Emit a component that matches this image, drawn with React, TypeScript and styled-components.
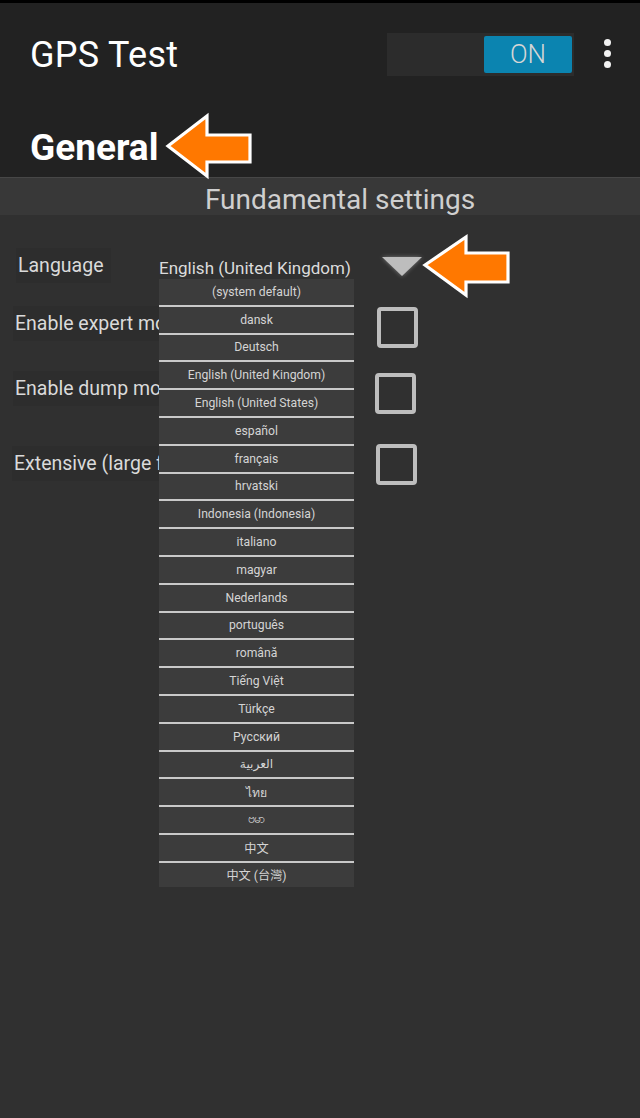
import React from "react";
import styled, { createGlobalStyle } from "styled-components";

const GlobalStyle = createGlobalStyle`
  html, body { margin: 0; padding: 0; background: #303030; }
  body { font-family: Roboto, "Noto Sans", "DejaVu Sans", "Noto Sans CJK TC", sans-serif; }
  * { box-sizing: border-box; }
`;

const Screen = styled.div`
  position: relative;
  width: 640px;
  height: 1118px;
  overflow: hidden;
  background: #303030;
  display: flex;
  flex-direction: column;
`;

const StatusStrip = styled.div`
  height: 3px;
  background: #000;
`;

const Header = styled.header`
  background: #222222;
  display: flex;
  flex-direction: column;
`;

const TopRow = styled.div`
  height: 104px;
  display: flex;
  align-items: center;
  padding-left: 30px;
`;

const Title = styled.h1`
  margin: 0;
  flex: 1;
  font-size: 36px;
  font-weight: 400;
  color: #ffffff;
  letter-spacing: 0.3px;
`;

const Toggle = styled.div`
  width: 187px;
  height: 43px;
  background: #2c2c2c;
  display: flex;
  justify-content: flex-end;
  align-items: center;
  padding-right: 2px;
  margin-top: -2px;
`;

const ToggleThumb = styled.div`
  width: 88px;
  height: 37px;
  background: #0b84b0;
  border-radius: 2px;
  color: #d6d6d6;
  font-size: 26px;
  font-weight: 300;
  display: flex;
  align-items: center;
  justify-content: center;
`;

const MenuButton = styled.div`
  width: 66px;
  height: 40px;
  display: flex;
  flex-direction: column;
  align-items: center;
  justify-content: center;
  gap: 4px;
  margin-top: -4px;
`;

const Dot = styled.span`
  width: 7px;
  height: 7px;
  border-radius: 50%;
  background: #f2f2f2;
`;

const Heading = styled.h2`
  margin: 0;
  height: 70px;
  padding: 10px 0 0 30px;
  display: flex;
  align-items: center;
  font-size: 37px;
  font-weight: 700;
  color: #ffffff;
`;

const SectionBar = styled.div`
  height: 38px;
  background: #383838;
  border-top: 1px solid #474747;
  display: flex;
  align-items: center;
  justify-content: center;
  padding: 5px 0 0 40px;
  font-size: 28px;
  color: #cfcfcf;
`;

const Settings = styled.div`
  display: flex;
  flex-direction: column;
`;

const Row = styled.div<{ $top: number; $h: number }>`
  margin-top: ${(p) => p.$top}px;
  height: ${(p) => p.$h}px;
  display: grid;
  grid-template-columns: 159px 195px 1fr;
  align-items: center;
`;

const Label = styled.div<{ $indent: number; $lift: number }>`
  grid-column: 1 / 3;
  grid-row: 1;
  justify-self: start;
  margin-left: ${(p) => p.$indent}px;
  margin-bottom: ${(p) => p.$lift}px;
  padding: 6px 8px 6px 2px;
  font-size: 19.5px;
  color: #dadada;
  background: #2d2d2d;
  white-space: nowrap;
`;

const ValueText = styled.div`
  grid-column: 2;
  grid-row: 1;
  margin-top: 4px;
  font-size: 17px;
  color: #dcdcdc;
  white-space: nowrap;
`;

const Control = styled.div<{ $shift: number }>`
  grid-column: 3;
  grid-row: 1;
  padding-left: ${(p) => p.$shift}px;
  display: flex;
  align-items: center;
`;

const Checkbox = styled.div`
  width: 41px;
  height: 41px;
  border: 4px solid #bdbdbd;
  border-radius: 4px;
`;

const Triangle = styled.svg`
  width: 40px;
  height: 22px;
  filter: drop-shadow(0 0 2px rgba(255, 255, 255, 0.35));
`;

const Dropdown = styled.ul`
  position: absolute;
  left: 159px;
  top: 279px;
  width: 195px;
  margin: 0;
  padding: 0;
  list-style: none;
  background: #3c3c3c;
`;

const Option = styled.li`
  height: 27.8px;
  border-bottom: 2px solid #c9c9c9;
  display: flex;
  align-items: center;
  justify-content: center;
  font-size: 12.2px;
  color: #d4d4d4;
  &:last-child {
    border-bottom: none;
    height: 24px;
  }
`;

const Callout = styled.svg<{ $x: number; $y: number }>`
  position: absolute;
  left: ${(p) => p.$x}px;
  top: ${(p) => p.$y}px;
  width: 92px;
  height: 68px;
  overflow: visible;
`;

const languages = [
  "(system default)",
  "dansk",
  "Deutsch",
  "English (United Kingdom)",
  "English (United States)",
  "español",
  "français",
  "hrvatski",
  "Indonesia (Indonesia)",
  "italiano",
  "magyar",
  "Nederlands",
  "português",
  "română",
  "Tiếng Việt",
  "Türkçe",
  "Русский",
  "العربية",
  "ไทย",
  "ဗမာ",
  "中文",
  "中文 (台灣)",
];

const ArrowCallout = ({ x, y, points }: { x: number; y: number; points: string }) => (
  <Callout $x={x} $y={y} viewBox="0 0 92 68">
    <polygon points={points} fill="#ff7800" stroke="#ffffff" strokeWidth={3.2} strokeLinejoin="miter" />
  </Callout>
);

export default function App() {
  return (
    <>
      <GlobalStyle />
      <Screen>
        <StatusStrip />
        <Header>
          <TopRow>
            <Title>GPS Test</Title>
            <Toggle>
              <ToggleThumb>ON</ToggleThumb>
            </Toggle>
            <MenuButton>
              <Dot />
              <Dot />
              <Dot />
            </MenuButton>
          </TopRow>
          <Heading>General</Heading>
        </Header>
        <SectionBar>Fundamental settings</SectionBar>
        <Settings>
          <Row $top={26} $h={50}>
            <Label $indent={16} $lift={2}>Language</Label>
            <ValueText>English (United Kingdom)</ValueText>
            <Control $shift={28}>
              <Triangle viewBox="0 0 40 22">
                <polygon points="0,2 40,2 20,21" fill="#bdbdbd" />
              </Triangle>
            </Control>
          </Row>
          <Row $top={10} $h={52}>
            <Label $indent={13} $lift={8}>Enable expert mode</Label>
            <Control $shift={23}>
              <Checkbox />
            </Control>
          </Row>
          <Row $top={12} $h={56}>
            <Label $indent={13} $lift={9}>Enable dump mode</Label>
            <Control $shift={21}>
              <Checkbox />
            </Control>
          </Row>
          <Row $top={15} $h={56}>
            <Label $indent={12} $lift={2}>Extensive (large files)</Label>
            <Control $shift={22}>
              <Checkbox />
            </Control>
          </Row>
        </Settings>
        <Dropdown>
          {languages.map((l) => (
            <Option key={l}>{l}</Option>
          ))}
        </Dropdown>
        <ArrowCallout x={164} y={112} points="4,34 43,4 43,23 86,23 86,50 43,50 43,64" />
        <ArrowCallout x={421} y={233} points="4,32 45,4 45,20 87,20 87,49 45,49 45,62" />
      </Screen>
    </>
  );
}
